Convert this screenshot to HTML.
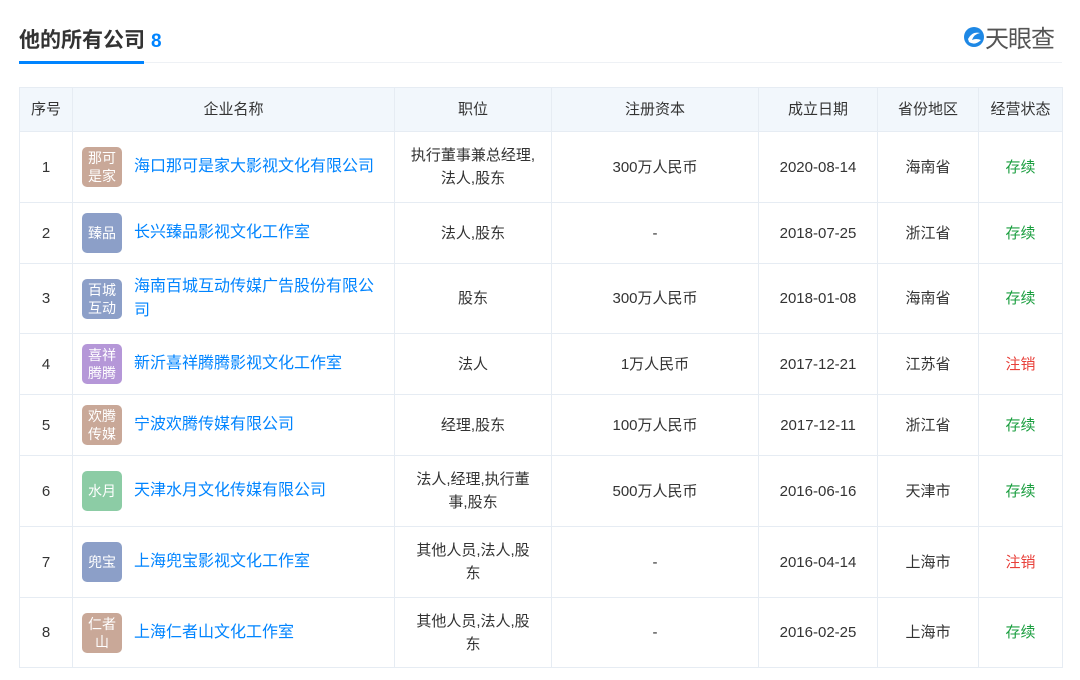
<!DOCTYPE html>
<html><head><meta charset="utf-8"><style>
body{margin:0;width:1080px;height:680px;background:#fff;font-family:"Liberation Sans","Noto Sans CJK SC",sans-serif;color:#333;overflow:hidden;position:relative}
.title{position:absolute;left:19px;top:24px;font-size:21px;font-weight:bold;color:#333}
.title span{color:#0084ff;font-size:19px;margin-left:6px}
.uline{position:absolute;left:19px;top:61px;width:125px;height:3px;background:#0084ff}
.hline{position:absolute;left:144px;top:62px;width:918px;height:1px;background:#eef1f5}
.logo{position:absolute;left:963px;top:19px;font-size:24px;color:#555;display:flex;align-items:center;letter-spacing:-1px}
table{position:absolute;left:19px;top:87px;border-collapse:collapse;table-layout:fixed;font-size:15px}
td,th{border:1px solid #e6ecf3;text-align:center;padding:0 6px;line-height:23px}
th{background:#f2f7fc;font-weight:normal;height:43px;color:#333}
.nm{text-align:left;padding-left:9px}
.nm div{display:flex;align-items:center}
.b{width:40px;height:40px;border-radius:5px;color:#fff;font-size:14px;line-height:18px;display:flex;align-items:center;justify-content:center;text-align:center;flex:none;margin-right:12px;letter-spacing:0}
.n{color:#0084ff;font-size:16px;line-height:24px}
.g{color:#1a9e3f}.r{color:#e8403a}
</style></head><body>
<div class="title">他的所有公司<span>8</span></div>
<div class="uline"></div><div class="hline"></div>
<div class="logo"><svg width="22" height="22" viewBox="0 0 22 22"><circle cx="11" cy="11" r="10" fill="#1e88e5"/><path d="M5 13 Q9 5 17 7 Q11 8 9 14 Q13 12 18 14 Q12 20 6 16Z" fill="#fff"/></svg><span>天眼查</span></div>
<table>
<colgroup><col width="53"><col width="322"><col width="157"><col width="207"><col width="119"><col width="101"><col width="84"></colgroup>
<tr><th>序号</th><th>企业名称</th><th>职位</th><th>注册资本</th><th>成立日期</th><th>省份地区</th><th>经营状态</th></tr>
<tr style="height:71px"><td>1</td><td class="nm"><div><span class="b" style="background:#c9a898">那可<br>是家</span><span class="n">海口那可是家大影视文化有限公司</span></div></td><td>执行董事兼总经理,<br>法人,股东</td><td>300万人民币</td><td>2020-08-14</td><td>海南省</td><td class="g">存续</td></tr>
<tr style="height:61px"><td>2</td><td class="nm"><div><span class="b" style="background:#8c9fc8">臻品</span><span class="n">长兴臻品影视文化工作室</span></div></td><td>法人,股东</td><td>-</td><td>2018-07-25</td><td>浙江省</td><td class="g">存续</td></tr>
<tr style="height:70px"><td>3</td><td class="nm"><div><span class="b" style="background:#8c9fc8">百城<br>互动</span><span class="n">海南百城互动传媒广告股份有限公<br>司</span></div></td><td>股东</td><td>300万人民币</td><td>2018-01-08</td><td>海南省</td><td class="g">存续</td></tr>
<tr style="height:61px"><td>4</td><td class="nm"><div><span class="b" style="background:#b597d8">喜祥<br>腾腾</span><span class="n">新沂喜祥腾腾影视文化工作室</span></div></td><td>法人</td><td>1万人民币</td><td>2017-12-21</td><td>江苏省</td><td class="r">注销</td></tr>
<tr style="height:61px"><td>5</td><td class="nm"><div><span class="b" style="background:#c9a898">欢腾<br>传媒</span><span class="n">宁波欢腾传媒有限公司</span></div></td><td>经理,股东</td><td>100万人民币</td><td>2017-12-11</td><td>浙江省</td><td class="g">存续</td></tr>
<tr style="height:71px"><td>6</td><td class="nm"><div><span class="b" style="background:#8ccca5">水月</span><span class="n">天津水月文化传媒有限公司</span></div></td><td>法人,经理,执行董<br>事,股东</td><td>500万人民币</td><td>2016-06-16</td><td>天津市</td><td class="g">存续</td></tr>
<tr style="height:71px"><td>7</td><td class="nm"><div><span class="b" style="background:#8c9fc8">兜宝</span><span class="n">上海兜宝影视文化工作室</span></div></td><td>其他人员,法人,股<br>东</td><td>-</td><td>2016-04-14</td><td>上海市</td><td class="r">注销</td></tr>
<tr style="height:70px"><td>8</td><td class="nm"><div><span class="b" style="background:#c9a898">仁者<br>山</span><span class="n">上海仁者山文化工作室</span></div></td><td>其他人员,法人,股<br>东</td><td>-</td><td>2016-02-25</td><td>上海市</td><td class="g">存续</td></tr>
</table>
</body></html>
